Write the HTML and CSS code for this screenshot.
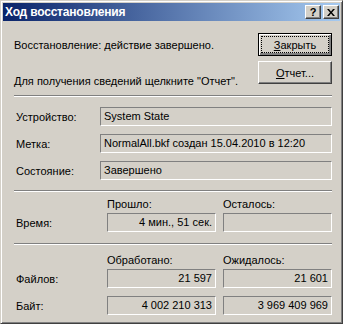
FILE: index.html
```html
<!DOCTYPE html>
<html lang="ru">
<head>
<meta charset="UTF-8">
<meta name="viewport" content="width=device-width, initial-scale=1.0">
<title>Ход восстановления</title>
<link rel="stylesheet" href="styles.css">
</head>

<body>

<div class="window">
    <div class="titlebar">
        <span class="title">Ход восстановления</span>
        <div class="caption-buttons">
            <button class="cap-btn help">?</button>
            <button class="cap-btn close">
                <svg width="8" height="7" viewBox="0 0 8 7">
                    <path d="M0 0h2l2 2.5 2-2.5h2l-3 3.5 3 3.5h-2l-2-2.5-2 2.5h-2l3-3.5z" fill="#000"/>
                </svg>
            </button>
        </div>
    </div>

    <div class="dialog-body">
        <div class="status">
            <p class="msg">Восстановление: действие завершено.</p>
            <button class="btn btn-default"><span class="focus"><u>З</u>акрыть</span></button>
            <p class="msg msg-bottom">Для получения сведений щелкните "Отчет".</p>
            <button class="btn btn-report"><u>О</u>тчет...</button>
        </div>

        <hr class="sep">

        <div class="details">
            <span class="label">Устройство:</span>
            <div class="field">System State</div>
            <span class="label">Метка:</span>
            <div class="field">NormalAll.bkf создан 15.04.2010 в 12:20</div>
            <span class="label">Состояние:</span>
            <div class="field">Завершено</div>
        </div>

        <hr class="sep sep-time">

        <div class="stats-head stats-time">
            <span></span>
            <span class="head">Прошло:</span>
            <span class="head">Осталось:</span>
        </div>
        <div class="stats">
            <span class="label">Время:</span>
            <div class="field num">4 мин., 51 сек.</div>
            <div class="field num"></div>
        </div>

        <hr class="sep sep-count">

        <div class="stats-head stats-count">
            <span></span>
            <span class="head">Обработано:</span>
            <span class="head">Ожидалось:</span>
        </div>
        <div class="stats">
            <span class="label">Файлов:</span>
            <div class="field num">21 597</div>
            <div class="field num">21 601</div>
            <span class="label">Байт:</span>
            <div class="field num">4 002 210 313</div>
            <div class="field num">3 969 409 969</div>
        </div>
    </div>
</div>

</body>
</html>
```

FILE: styles.css
```css
body {
    margin: 0;
    font-family: "Liberation Sans", Arial, sans-serif;
    font-size: 11px;
    color: #000;
    background-color: #d4d0c8;
}

.window {
    width: 343px;
    height: 324px;
    box-sizing: border-box;
    background-color: #d4d0c8;
    border: 1px solid;
    border-color: #d4d0c8 #404040 #404040 #d4d0c8;
    box-shadow: inset 1px 1px #fff, inset -1px -1px #808080;
    padding: 2px;
}

.titlebar {
    height: 18px;
    display: flex;
    align-items: center;
    justify-content: space-between;
    padding-left: 2px;
    padding-right: 1px;
    background: linear-gradient(to right, #0a246a, #a6caf0);
}

.title {
    color: #fff;
    font-weight: bold;
    font-size: 12px;
    letter-spacing: -0.2px;
}

.caption-buttons {
    display: flex;
    gap: 2px;
}

.cap-btn {
    width: 16px;
    height: 14px;
    padding: 0;
    display: flex;
    align-items: center;
    justify-content: center;
    background-color: #d4d0c8;
    border: 1px solid;
    border-color: #fff #404040 #404040 #fff;
    box-shadow: inset -1px -1px #808080;
    font-family: "Liberation Sans", Arial, sans-serif;
    font-weight: bold;
    font-size: 11px;
    line-height: 12px;
    color: #000;
}

.dialog-body {
    padding: 12px 8px 0 11px;
}

.status {
    display: grid;
    grid-template-columns: 1fr 74px;
    grid-template-rows: 23px 27px;
    row-gap: 5px;
}

.msg {
    margin: 0;
    align-self: center;
    line-height: 14px;
}

.msg-bottom {
    align-self: end;
}

.btn {
    height: 23px;
    padding: 0;
    background-color: #d4d0c8;
    border: 1px solid;
    border-color: #fff #404040 #404040 #fff;
    box-shadow: inset -1px -1px #808080;
    font-family: "Liberation Sans", Arial, sans-serif;
    font-size: 11px;
    color: #000;
}

.btn-default {
    border: 1px solid #000;
    box-shadow: inset 1px 1px #fff, inset -2px -2px #808080, inset -1px -1px #404040;
    display: flex;
    padding: 3px;
}

.focus {
    flex: 1;
    display: flex;
    align-items: center;
    justify-content: center;
    outline: 1px dotted #000;
}

.btn-report {
    align-self: start;
}

.sep {
    margin: 7px 0 0;
    height: 0;
    border: none;
    border-top: 1px solid #808080;
    border-bottom: 1px solid #fff;
}

.sep-time {
    margin-top: 10px;
}

.sep-count {
    margin-top: 11px;
}

.details {
    margin-top: 10px;
    display: grid;
    grid-template-columns: 86px 1fr;
    grid-auto-rows: 19px;
    row-gap: 8px;
}

.label {
    padding-left: 2px;
    align-self: center;
}

.field {
    box-sizing: border-box;
    height: 19px;
    line-height: 17px;
    padding: 0 3px;
    border: 1px solid;
    border-color: #808080 #fff #fff #808080;
    white-space: nowrap;
    overflow: hidden;
}

.num {
    text-align: right;
}

.stats-head,
.stats {
    display: grid;
    grid-template-columns: 86px 1fr 1fr;
    column-gap: 7px;
}

.stats {
    grid-auto-rows: 19px;
    row-gap: 8px;
}

.head {
    line-height: 14px;
    margin-bottom: 2px;
}

.stats-time {
    margin-top: 5px;
}

.stats-count {
    margin-top: 8px;
}
```
